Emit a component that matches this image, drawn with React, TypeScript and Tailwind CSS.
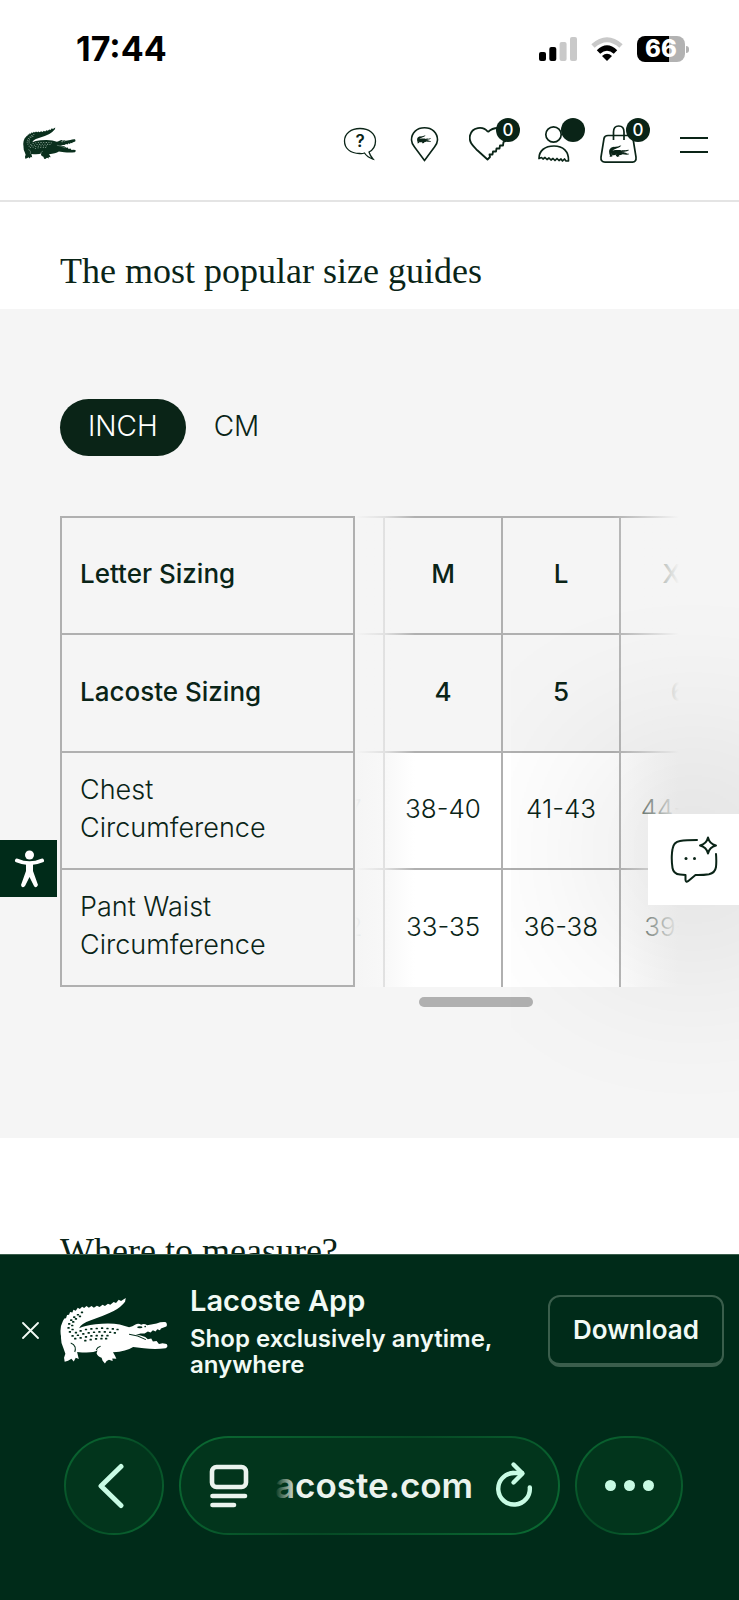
import { useLayoutEffect, useRef, useState } from "react";
import type { ReactNode } from "react";

const SCALES: [number, number][] = [
  [66, 46], [54, 53], [43, 60], [34, 69], [28, 80], [26, 92], [30, 104],
  [60, 58], [48, 65], [40, 74], [37, 85], [38, 97],
  [48, 106], [62, 101], [78, 97], [94, 95], [110, 94], [126, 93], [142, 94], [158, 95], [172, 97],
  [38, 116], [54, 114], [70, 110], [86, 107], [102, 105], [118, 104], [134, 104], [150, 105], [164, 107],
  [46, 124], [62, 122], [78, 119], [94, 116], [110, 115], [126, 115], [142, 115],
  [76, 130], [92, 127], [108, 125], [124, 124], [138, 124],
];

function Crocodile({ className, scale, detail = true }: { className: string; scale: string; detail?: boolean }) {
  return (
    <svg viewBox="0 0 322 198" className={className} fill="currentColor" aria-hidden="true">
      <path d="M196 3 L194 14 Q182 30 160 42 Q132 56 92 69 Q62 79 57 93 Q72 85 106 81 Q150 76 178 82 L206 90 Q216 88 225 82 Q234 77 242 83 Q250 78 260 84 L288 79 Q300 74 316 75 Q321 82 317 88 L301 94 L298 99 L290 96 L285 103 L277 99 L270 106 L262 103 L252 109 L240 109 L226 113 L238 114 L254 119 L262 126 L272 124 L277 133 L288 131 L295 140 L306 138 L318 140 Q324 149 315 153 Q284 157 250 153 L218 149 Q198 162 158 165 L164 175 L168 184 L156 183 L157 191 L146 187 L139 191 L134 198 L127 190 L124 181 Q112 178 109 168 L112 159 Q98 169 51 164 L54 177 L56 185 L47 181 L41 192 L34 184 L24 190 L14 193 L12 181 L16 169 L10 152 Q2 139 3 117 Q-2 91 9 71 L13 64 L18 63 L21 54 L27 53 L30 45 L37 46 L40 38 L47 41 L53 32 L59 36 L66 29 L72 33 L79 27 L86 32 L94 27 L101 32 L110 26 L118 30 L127 23 L134 27 L143 20 L150 23 L160 15 L167 18 L175 8 L182 12 Z" />
      <path d="M206 111 Q232 114 256 127 M108 158 Q111 150 121 147 M32 137 Q42 140 45 149 Q47 157 44 164" fill="none" stroke={scale} strokeWidth={3} />
      <ellipse cx="238" cy="90" rx="8" ry="3" fill={scale} />
      <circle cx="254" cy="88" r="2.5" fill={scale} />
      {detail && SCALES.map(([x, y]) => <rect key={`${x}-${y}`} x={x - 4} y={y - 2.5} width="7" height="5" rx="1.5" fill={scale} />)}
    </svg>
  );
}

function StatusBar() {
  return (
    <div className="flex h-[98px] items-center justify-between pr-[50px] pl-[76px] text-black">
      <time className="text-[34px] leading-10 font-bold">17:44</time>
      <div className="flex items-center gap-[14px]">
        <svg width="38" height="26" viewBox="0 0 38 26" aria-label="Signal">
          <rect x="0" y="16" width="7" height="9" rx="2" />
          <rect x="10.300" y="11" width="7" height="14" rx="2" />
          <rect x="20.600" y="6" width="7" height="19" rx="2" fill="#c9c9c9" />
          <rect x="31" y="1" width="7" height="24" rx="2" fill="#c9c9c9" />
        </svg>
        <svg width="32" height="26" viewBox="0 0 32 26" aria-label="Wi-Fi">
          <path d="M2 10 Q16 -2.500 30 10" fill="none" stroke="#c9c9c9" strokeWidth="5" />
          <path d="M7.500 16 Q16 8 24.500 16" fill="none" stroke="#000" strokeWidth="5" />
          <path d="M11 20 Q16 15.500 21 20 L16 25 Z" />
        </svg>
        <div className="flex items-center gap-px">
          <div className="flex h-[26px] w-[48px] items-center justify-center rounded-lg bg-linear-to-r from-black from-67% to-[#b2b2b2] to-67%">
            <span className="text-[24px] leading-6 font-extrabold text-white">66</span>
          </div>
          <div className="h-[7px] w-[3px] rounded-r-full bg-[#b2b2b2]" />
        </div>
      </div>
    </div>
  );
}

function IconButton({ label, badge, children }: { label: string; badge?: string; children: ReactNode }) {
  return (
    <button type="button" aria-label={label} className="relative flex size-10 items-center justify-center">
      {children}
      {badge !== undefined && (
        <span className="absolute -top-[5px] left-[27px] flex size-6 items-center justify-center rounded-full bg-[#0a2417] text-[17px] leading-6 font-medium text-white">
          {badge}
        </span>
      )}
    </button>
  );
}

function Header() {
  return (
    <header className="flex items-center border-b-2 border-[#e4e4e4] pt-[25px] pr-[25px] pb-[37px] pl-[23px]">
      <a href="#home" aria-label="Lacoste">
        <Crocodile className="w-[53px] text-[#0a2f1d]" scale="#9db3a7" />
      </a>
      <nav className="ml-auto flex items-center gap-[25px]" aria-label="Main">
        <IconButton label="Help">
          <svg width="40" height="40" viewBox="0 0 40 40" fill="none" stroke="currentColor" strokeWidth="1.3">
            <path d="M25.500 30 Q23 31 20.500 30.500 C11 30.500 5.500 25 5.500 18 C5.500 10.500 12 5.500 21 5.500 C30 5.500 36.500 10.500 36.500 18 C36.500 23 34 27 30 29 Q31 32.500 34 36 Q28.500 34.500 25.500 30 Z" />
            <text x="21" y="24" textAnchor="middle" fontSize="17" fontWeight="600" fill="currentColor" stroke="none">?</text>
          </svg>
        </IconButton>
        <IconButton label="Stores">
          <svg width="40" height="40" viewBox="0 0 40 40" fill="none" stroke="currentColor" strokeWidth="1.6">
            <path d="M20.500 37.500 Q15 30 10.500 24 Q7.500 20 7.500 17 C7.500 9.500 13 4.800 20.500 4.800 C28 4.800 33.500 9.500 33.500 17 Q33.500 20 30.500 24 Q26 30 20.500 37.500 Z" />
          </svg>
          <span className="absolute top-[12px] left-[13px]">
            <Crocodile className="w-[14px]" scale="#ffffff" detail={false} />
          </span>
        </IconButton>
        <IconButton label="Wishlist" badge="0">
          <svg width="40" height="40" viewBox="0 0 40 40" fill="none" stroke="currentColor" strokeWidth="1.8" strokeLinejoin="round">
            <path d="M19 9 C14 2.500 3 4 1 12.500 C-0.500 19 4 23 8 27 L18.500 36.500 L21 34 L20.500 31.500 L23.500 31.500 L24 28.500 L27 28.500 L27.500 25.500 L30.500 25.500 L31 22.500 L34 22.500 L34.500 19 L37 18 M19 9 Q23 5 29 5" />
          </svg>
        </IconButton>
        <IconButton label="Account" badge="">
          <svg width="40" height="40" viewBox="0 0 40 40" fill="none" stroke="currentColor" strokeWidth="1.7" strokeLinejoin="round">
            <circle cx="19.500" cy="11.500" r="7.700" />
            <path d="M5 35.500 C5 27.500 11 23 20 23 C29 23 35 28.500 34.500 38 L32 38 L30.500 36 L28.500 38 L27 36 L25 37.500 L23 35.500 L21 37.500 L19 35.500 L17 37 L15 35 L13 36.500 L11 34.500 L9 36 L7.500 34.500 Z" />
          </svg>
        </IconButton>
        <IconButton label="Bag" badge="0">
          <svg width="40" height="40" viewBox="0 0 40 40" fill="none" stroke="currentColor" strokeWidth="1.700">
            <path d="M9 12.500 H30 Q33.500 12.500 34 15.500 L37 34 Q37.500 39.100 33.500 39.100 H6 Q1.500 39.100 2 34 L5 15.500 Q5.500 12.500 9 12.500 Z" />
            <path d="M14.500 17 V9 Q14.500 3 19.700 3 Q25 3 25 9 V17" />
          </svg>
          <span className="absolute top-[22px] left-[10px]">
            <Crocodile className="w-[20px]" scale="#ffffff" detail={false} />
          </span>
        </IconButton>
        <button type="button" aria-label="Menu" className="ml-[10px] flex h-10 w-10 flex-col items-center justify-center gap-[12px] pt-[3px]">
          <span className="h-[2px] w-[28px] bg-[#0a2417]" />
          <span className="h-[2px] w-[28px] bg-[#0a2417]" />
        </button>
      </nav>
    </header>
  );
}

const ROWS: { label: string; values: string[]; head?: boolean }[] = [
  { label: "Letter Sizing", values: ["S", "M", "L", "XL"], head: true },
  { label: "Lacoste Sizing", values: ["3", "4", "5", "6"], head: true },
  { label: "Chest Circumference", values: ["35-37", "38-40", "41-43", "44-46"] },
  { label: "Pant Waist Circumference", values: ["30-32", "33-35", "36-38", "39-41"] },
];

function SizeTable() {
  const scroller = useRef<HTMLDivElement>(null);
  useLayoutEffect(() => {
    if (scroller.current) scroller.current.scrollLeft = 88;
  }, []);
  return (
    <div className="relative mt-[60px]">
      <div ref={scroller} className="overflow-x-auto [scrollbar-width:none]">
        <table className="w-[767px] table-fixed border-separate border-spacing-0">
          <colgroup>
            <col className="w-[295px]" />
            <col span={4} className="w-[118px]" />
          </colgroup>
          <tbody>
            {ROWS.map((row, r) => (
              <tr key={row.label} className={r === 0 ? "h-[119px]" : row.head ? "h-[118px]" : "h-[117px]"}>
                <th
                  scope="row"
                  className={`sticky left-0 z-20 border-x-2 border-b-2 border-[#b0b0b0] bg-[#f5f5f5] pr-12 pb-[3px] pl-[18px] text-left leading-[38px] ${r === 0 ? "border-t-2" : ""} ${row.head ? "text-[26px] font-medium" : "text-[27px] font-light"}`}
                >
                  {row.label}
                </th>
                {row.values.map((v) => (
                  <td
                    key={v}
                    className={`border-r-2 border-[#b0b0b0] pb-[3px] text-center text-[26px] leading-[38px] ${r === 0 ? "border-t-2" : ""} ${r < 3 ? "border-b-2" : ""} ${row.head ? "font-medium" : "bg-white font-light"}`}
                  >
                    {v}
                  </td>
                ))}
              </tr>
            ))}
          </tbody>
        </table>
      </div>
      <div className="pointer-events-none absolute inset-y-0 left-[295px] w-[60px] bg-linear-to-r from-[#f5f5f5] via-[#f5f5f5]/70 to-[#f5f5f5]/0" />
      <div className="pointer-events-none absolute inset-y-0 right-0 w-[66px] bg-linear-to-r from-[#f5f5f5]/0 to-[#f5f5f5]" />
    </div>
  );
}

function SizeGuide() {
  const [unit, setUnit] = useState("INCH");
  return (
    <section className="relative bg-[#f5f5f5] px-[60px] pt-[90px] pb-[131px]">
      <div className="flex">
        {["INCH", "CM"].map((u) => (
          <button
            key={u}
            type="button"
            aria-pressed={unit === u}
            onClick={() => setUnit(u)}
            className={`h-[57px] rounded-full px-[28px] pb-1 text-[28px] leading-9 font-light ${unit === u ? "bg-[#0a2417] text-white" : ""}`}
          >
            {u}
          </button>
        ))}
      </div>
      <SizeTable />
      <div className="mt-[10px] ml-[295px] flex justify-center">
        <div className="mr-[82px] h-[10px] w-[114px] rounded-full bg-[#b0b0b0]" />
      </div>
      <div className="pointer-events-none absolute inset-x-0 top-[291px] bottom-0 z-30 overflow-hidden">
        <button
          type="button"
          aria-label="Chat"
          className="pointer-events-auto absolute top-[214px] right-0 flex size-[91px] items-center justify-center bg-white shadow-[0_-10px_200px_20px_rgba(0,0,0,0.24)]"
        >
          <svg width="48" height="48" viewBox="0 0 48 48" fill="none" stroke="currentColor" strokeWidth="2" strokeLinecap="round" strokeLinejoin="round">
            <path d="M27 4 Q16 4 10 5 Q3.500 6 2.500 13 Q1 22 2.500 32 Q3.500 38 10 38.500 L15.500 39 V44 Q15.800 46.500 18 45.200 L25.500 39 Q33 39.200 39 38.200 Q45 37 46 31 Q46.600 25 46 18" />
            <path d="M38 1.500 Q39.500 8 46 9.500 Q39.500 11 38 17.500 Q36.500 11 30 9.500 Q36.500 8 38 1.500 Z" />
            <circle cx="16" cy="22.500" r="1.500" fill="currentColor" stroke="none" />
            <circle cx="24.500" cy="22.500" r="1.500" fill="currentColor" stroke="none" />
          </svg>
        </button>
      </div>
    </section>
  );
}

function AppBanner() {
  return (
    <aside className="flex h-[152px] items-center border-t border-[#3a5e4c] pr-[15px] pl-[22px]" aria-label="Lacoste App">
      <button type="button" aria-label="Close">
        <svg width="17" height="17" viewBox="0 0 17 17" stroke="currentColor" strokeWidth="1.800" strokeLinecap="round">
          <path d="M1 1 L16 16 M16 1 L1 16" />
        </svg>
      </button>
      <Crocodile className="ml-[21px] w-[108px] shrink-0 text-white" scale="#002b19" />
      <div className="ml-[22px] flex-1 pb-px">
        <p className="text-[29px] leading-9 font-semibold">Lacoste App</p>
        <p className="mt-[7px] max-w-[340px] text-[24px] leading-[26px] font-semibold">Shop exclusively anytime, anywhere</p>
      </div>
      <button type="button" className="h-[72px] rounded-xl border-2 border-b-4 border-[#3a5e4c] px-[23px] text-[26px] leading-8 font-semibold">
        Download
      </button>
    </aside>
  );
}

function Glass({ className, children }: { className: string; children: ReactNode }) {
  return (
    <div className={`rounded-full bg-linear-135 from-[#0b6b33] via-[#064a25] to-[#0b6b33] p-[2px] ${className}`}>
      <div className="flex h-full w-full items-center rounded-full bg-[#02351c]">{children}</div>
    </div>
  );
}

function BrowserBar() {
  return (
    <div className="flex items-center gap-[15px] pt-[30px] pr-[56px] pb-[65px] pl-[64px] text-[#c8fbe4]">
      <Glass className="h-[99px] w-[100px] shrink-0">
        <button type="button" aria-label="Back" className="flex size-full items-center justify-center pr-[6px]">
          <svg width="28" height="46" viewBox="0 0 28 46" fill="none" stroke="currentColor" strokeWidth="5" strokeLinecap="round" strokeLinejoin="round">
            <path d="M24 3.500 L4 23 L24 42.500" />
          </svg>
        </button>
      </Glass>
      <Glass className="h-[99px] flex-1">
        <button type="button" aria-label="Page settings" className="ml-[28px] shrink-0 text-[#ebf3ee]">
          <svg width="40" height="44" viewBox="0 0 40 44" fill="none" stroke="currentColor" strokeWidth="4.600" strokeLinecap="round">
            <rect x="3" y="3" width="34" height="20" rx="4.500" />
            <path d="M3.500 32 H36" />
            <path d="M3.500 41 H25" />
          </svg>
        </button>
        <div className="relative ml-[26px] flex-1 pb-[2px] text-[35px] leading-[44px] font-semibold text-[#ebf3ee]">
          acoste.com
          <div className="absolute inset-y-0 left-0 w-[22px] bg-linear-to-r from-[#02351c] to-[#02351c]/0" />
        </div>
        <button type="button" aria-label="Reload" className="mr-[24px] shrink-0 pb-[6px]">
          <svg width="40" height="48" viewBox="0 0 40 48" fill="none" stroke="currentColor" strokeWidth="4.400" strokeLinecap="round" strokeLinejoin="round">
            <path d="M19 14 A15.800 15.800 0 1 0 35.800 28.500" />
            <path d="M19 14 H28" />
            <path d="M19.500 5.500 L28.500 14.500 L19.500 23.500" />
          </svg>
        </button>
      </Glass>
      <Glass className="h-[99px] w-[108px] shrink-0">
        <button type="button" aria-label="More" className="flex size-full items-center justify-center gap-2">
          <span className="size-[11px] rounded-full bg-current" />
          <span className="size-[11px] rounded-full bg-current" />
          <span className="size-[11px] rounded-full bg-current" />
        </button>
      </Glass>
    </div>
  );
}

export default function App() {
  return (
    <div className="relative min-h-screen overflow-x-clip bg-white font-['Inter','Liberation_Sans',sans-serif] text-[#0a2417]">
      <StatusBar />
      <Header />
      <main>
        <h2 className="px-[60px] pt-[45px] pb-[14px] font-['Liberation_Serif',serif] text-[36px] leading-[48px]">The most popular size guides</h2>
        <SizeGuide />
        <h2 className="px-[60px] pt-[89px] pb-[14px] font-['Liberation_Serif',serif] text-[36px] leading-[48px]">Where to measure?</h2>
      </main>
      <button type="button" aria-label="Accessibility" className="fixed top-[840px] left-0 z-30 flex size-[57px] items-center justify-center bg-[#002b19] text-white">
        <svg width="30" height="40" viewBox="0 0 30 40" fill="currentColor">
          <circle cx="15.500" cy="6" r="4.500" />
          <path d="M3 11.500 Q15.500 17 28 11.500 M15.500 15 V22" fill="none" stroke="currentColor" strokeWidth="4" strokeLinecap="round" />
          <path d="M12 15 H19 V22 L24 36 Q22 40 20 37 L15.500 28 L11 37 Q8 40 7 36 L12 22 Z" />
        </svg>
      </button>
      <footer className="fixed inset-x-0 bottom-0 z-40 bg-[#002b19] text-[#f2faf5]">
        <AppBanner />
        <BrowserBar />
      </footer>
    </div>
  );
}
